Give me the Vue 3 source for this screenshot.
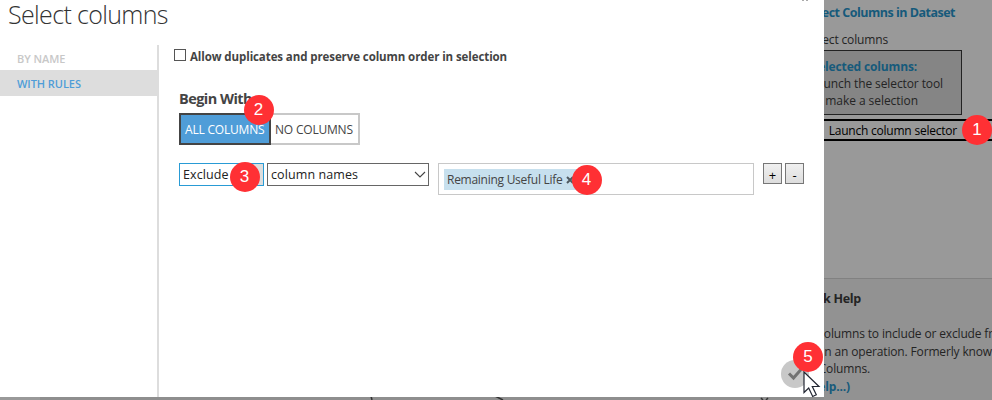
<script setup>
const tabs = [
  { label: 'BY NAME', active: false },
  { label: 'WITH RULES', active: true },
]
</script>

<template>
  <div class="screen">
    <div class="canvas-strip">
      <div class="corner"></div>
      <svg width="784" height="4" viewBox="0 0 784 4"><path d="M331 0l1 4M455 0l8 4M721 2l2 2M728 2l-2 2" fill="none" stroke="#333" stroke-width="1.5" /></svg>
    </div>

    <aside class="properties">
      <div class="module">
        <h2><span>Select Columns in Dataset</span></h2>
        <div class="label"><span>Select columns</span></div>
        <div class="selected">
          <strong><span>Selected columns:</span></strong>
          <p class="l1"><span>Launch the selector tool</span></p>
          <p class="l2"><span>to make a selection</span></p>
        </div>
        <div class="launch"><span>Launch column selector</span></div>
      </div>
      <div class="help">
        <h3><span>Quick Help</span></h3>
        <p class="h1"><span>Select columns to include or exclude fr</span></p>
        <p class="h2"><span>in an operation. Formerly know</span></p>
        <p class="h3"><span>Columns.</span></p>
        <p class="h4"><span>(help...)</span></p>
      </div>
    </aside>

    <main class="dialog">
      <h1>Select columns</h1>
      <div class="body">
        <nav>
          <div v-for="t in tabs" :key="t.label" class="tab" :class="{ active: t.active }">{{ t.label }}</div>
        </nav>
        <section class="rules">
          <label class="dup"><i class="box"></i><span>Allow duplicates and preserve column order in selection</span></label>
          <h4>Begin With</h4>
          <div class="toggle">
            <div class="opt on"><span>ALL COLUMNS</span></div>
            <div class="opt off"><span>NO COLUMNS</span></div>
          </div>
          <div class="rule">
            <div class="select first"><span>Exclude</span><b class="drop"><svg width="12" height="8" viewBox="0 0 12 8"><path d="M1 1l5 5 5-5" fill="none" stroke="#555" /></svg></b></div>
            <div class="select second"><span>column names</span><svg width="12" height="8" viewBox="0 0 12 8"><path d="M1 1l5 5 5-5" fill="none" stroke="#444" stroke-width="1.1" /></svg></div>
            <div class="names"><div class="tag"><span>Remaining Useful Life</span><svg width="8" height="8" viewBox="0 0 8 8"><path d="M1 1l6 6M7 1l-6 6" fill="none" stroke="#505a60" stroke-width="2" /></svg></div></div>
            <div class="sq plus">+</div>
            <div class="sq">-</div>
          </div>
        </section>
      </div>
      <svg class="close" width="10" height="2" viewBox="0 0 10 2"><path d="M2 0h2M6 0h2" stroke="#aaa" stroke-width="2" /></svg>
      <div class="ok"><svg width="28" height="28" viewBox="0 0 28 28"><circle cx="14" cy="14" r="14" fill="#c8c8c8" /><path d="M8 13.5l4.500 4.500L20 9.500" fill="none" stroke="#737373" stroke-width="3" /></svg></div>
    </main>

    <span class="badge b1">1</span>
    <span class="badge b2">2</span>
    <span class="badge b3">3</span>
    <span class="badge b4">4</span>
    <span class="badge b5">5</span>
    <svg class="cursor" width="18" height="27" viewBox="0 0 18 27"><path d="M1 1v20.500l4.700-4.500 4 8.500 3.600-1.700-4-8.300H16z" fill="#fff" stroke="#222632" stroke-width="1.200" /></svg>
  </div>
</template>

<style>
body { margin: 0; overflow: hidden; }
</style>

<style scoped>
* { box-sizing: border-box; }
h1, h2, h3, h4, p { margin: 0; font-weight: 400; }
span { white-space: nowrap; }
.screen { position: relative; width: 992px; height: 400px; overflow: hidden; background: #999; font-family: "Open Sans", "Noto Sans", sans-serif; color: #444; display: flex; justify-content: flex-end; }
.canvas-strip { position: absolute; left: 0; top: 396px; width: 824px; height: 4px; background: #8e8e8e; display: flex; }
.corner { width: 40px; height: 4px; background: #999; }
.properties { width: 212px; height: 400px; font-size: 12px; color: #242424; }
.properties span { display: block; }
.module { height: 278px; display: flex; flex-direction: column; align-items: flex-end; text-align: right; }
.module h2 { height: 30px; padding: 3px 37px 0 0; font-size: 12.500px; line-height: 19px; font-weight: 700; color: #165a7b; letter-spacing: -.5px; }
.label { height: 20px; padding-right: 104px; line-height: 19px; letter-spacing: -.15px; }
.selected { width: 180px; height: 65px; margin-right: 30px; padding-top: 7px; border: 1px solid #222; background: #858585; }
.selected strong { display: block; padding-right: 44px; line-height: 17px; color: #165a7b; letter-spacing: -.15px; }
.selected p { line-height: 17px; }
.l1 { padding-right: 18px; letter-spacing: -.1px; }
.l2 { padding-right: 43px; letter-spacing: -.05px; }
.launch { width: 200px; height: 22px; margin: 4px 0 0; padding-right: 35px; border: 2px solid #000; border-right: 0; line-height: 20px; letter-spacing: -.22px; color: #000; }
.help { height: 122px; border-top: 1px solid #818181; background: #929292; padding-top: 10px; }
.help h3 { height: 36px; line-height: 19px; padding-right: 131px; font-size: 12.500px; font-weight: 700; text-align: right; letter-spacing: -.3px; }
.help p { line-height: 17.600px; text-align: right; letter-spacing: -.15px; }
.help .h1 { margin-right: -1px; }
.help .h3 { padding-right: 122px; }
.help .h4 { padding-right: 142px; color: #165a7b; font-weight: 700; }
.dialog { position: absolute; left: 0; top: 0; width: 824px; height: 397px; background: #fff; }
.dialog h1 { height: 45px; padding-left: 8px; font-size: 25px; line-height: 29px; font-weight: 300; letter-spacing: -.65px; color: #333; }
.body { display: flex; height: 352px; }
nav { width: 159px; border-right: 2px solid #ddd; }
.tab { height: 25px; padding-left: 17px; font-size: 11px; line-height: 27px; font-weight: 600; letter-spacing: -.05px; color: #c8c8c8; }
.tab.active { height: 26px; background: #ddd; color: #4f9dd8; }
.rules { flex: 1; padding-left: 15px; }
.dup { display: flex; height: 41px; padding-top: 4px; font-size: 11.500px; line-height: 16px; font-weight: 700; letter-spacing: -.09px; }
.box { width: 12px; height: 12px; margin-right: 4px; border: 1px solid #555; }
h4 { height: 27px; padding: 1px 0 0 5px; font-size: 14.500px; line-height: 24px; font-weight: 700; letter-spacing: -.55px; }
.toggle { display: flex; height: 32px; padding-left: 5px; font-size: 12px; line-height: 30px; letter-spacing: -.2px; }
.opt { height: 32px; border: 2px solid #c8c8c8; }
.on { width: 92px; padding-left: 4px; background: #4f9dd8; border-color: #444; color: #fff; }
.off { width: 89px; padding-left: 4px; border-left: 0; }
.rule { display: flex; margin: 18px 0 0 5px; }
.select { display: flex; height: 23px; border: 1px solid #666; padding-left: 3px; font-size: 12.500px; line-height: 21px; letter-spacing: .1px; color: #222; justify-content: space-between; align-items: center; }
.first { width: 85px; border-color: #299bd5; margin-right: 3px; }
.drop { display: flex; width: 19px; height: 21px; align-items: center; justify-content: center; background: #ddd; }
.second { width: 162px; padding: 0 2px 0 3px; margin-right: 9px; }
.names { width: 316px; height: 32px; padding: 5px; border: 1px solid #c8c8c8; }
.tag { display: flex; align-items: center; width: 137px; height: 21px; padding-left: 3px; background: #c7e0ee; font-size: 12px; line-height: 21px; letter-spacing: -.27px; gap: 4px; }
.sq { width: 19px; height: 21px; margin-left: 3px; border: 1px solid #777; background: linear-gradient(#f0f0f0, #ddd); color: #000; font-size: 13px; line-height: 22px; text-align: center; }
.plus { margin-left: 9px; }
.close { position: absolute; left: 800px; top: 0; }
.ok { position: absolute; left: 781px; top: 360px; display: flex; }
.badge { position: absolute; width: 30px; height: 30px; border-radius: 50%; background: #ff3034; color: #fff; font: 17px/30px "Liberation Sans", sans-serif; text-align: center; }
.b1 { left: 962px; top: 115px; }
.b2 { left: 243.500px; top: 95px; }
.b3 { left: 229.500px; top: 161.500px; }
.b4 { left: 571.500px; top: 164.500px; }
.b5 { left: 793px; top: 342px; }
.cursor { position: absolute; left: 803px; top: 371px; }
</style>
